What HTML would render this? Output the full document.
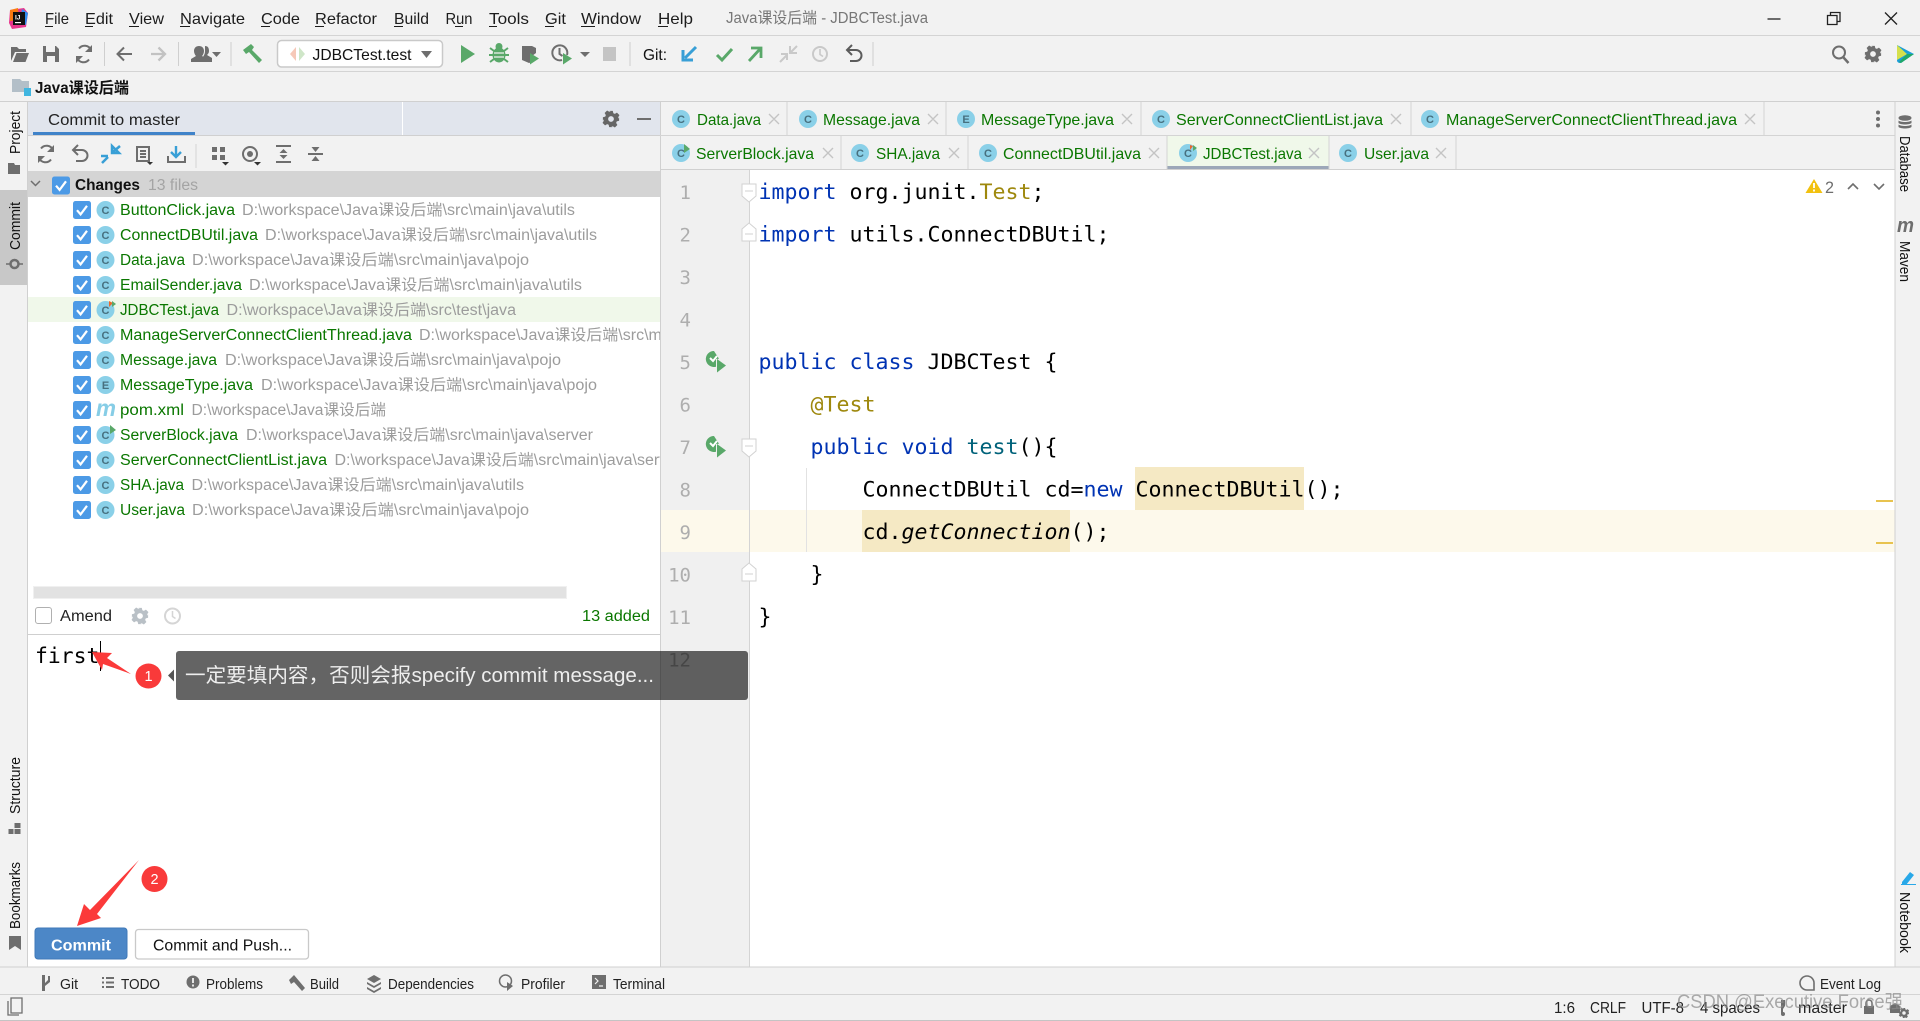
<!DOCTYPE html>
<html lang="zh"><head><meta charset="utf-8"><title>Java课设后端 - JDBCTest.java</title>
<style>
html,body{margin:0;padding:0;width:1920px;height:1021px;overflow:hidden;background:#f2f2f2}
svg{display:block;font-family:"Liberation Sans","Noto Sans CJK SC",sans-serif}
text{white-space:pre}
.m{font-size:16px;fill:#1c1c1c}
.t{font-size:16px;fill:#0a7700}
.f{font-size:15.5px;fill:#0a7700}
.p{font-size:15.5px;fill:#9c9c9c}
.x{stroke:#c4c4c4;stroke-width:1.4;fill:none}
.ci circle{fill:#8ad0e8}
.ci text{font-size:11px;font-weight:bold;fill:#47707f;text-anchor:middle}
.c{font-family:"DejaVu Sans Mono","Liberation Mono",monospace;font-size:21.6px;fill:#000}
.k{fill:#0033b3}.a{fill:#9e880d}.g{fill:#00627a}
.n{font-family:"DejaVu Sans Mono","Liberation Mono",monospace;font-size:19px;fill:#aeaeae;text-anchor:end}
.v{font-size:14.5px;fill:#111}
.b{font-size:14.5px;fill:#222}
.s{font-size:15.5px;fill:#222}
.i{fill:#6e6e6e}
.l{stroke:#6e6e6e;stroke-width:2;fill:none}
</style></head><body>
<svg width="1920" height="1021" viewBox="0 0 1920 1021" xmlns="http://www.w3.org/2000/svg">
<defs>
<g id="cb"><rect x="0" y="0" width="18" height="18" rx="2.5" fill="#4c9ae6"/><path d="M4 9.200l3.600 4.200L14 4.800" fill="none" stroke="#fff" stroke-width="2.2"/></g>
<path id="gear" d="M-2-9h4l.6 2.6 1.7.7 2.3-1.4 2.8 2.8-1.4 2.3.7 1.7L9-2v4l-2.6.6-.7 1.7 1.4 2.3-2.8 2.8-2.3-1.4-1.7.7L2 9h-4l-.6-2.6-1.7-.7-2.3 1.4-2.8-2.8 1.4-2.3-.7-1.7L-9 2v-4l2.6-.6.7-1.7-1.4-2.3 2.8-2.8 2.3 1.4 1.7-.7zM0-3.2a3.2 3.2 0 1 0 0 6.4 3.2 3.2 0 1 0 0-6.4z" fill-rule="evenodd"/>
<g id="rg"><path d="M-1 -10a8 8 0 1 0 2 15.7V-2l3-.2z" fill="#59a869"/><path d="M-5-3l3 3 4-5" fill="none" stroke="#fff" stroke-width="2"/><path d="M2-2l9 6.5-9 7z" fill="#59a869"/></g>
<path id="fd" d="M-7 0v-8h14V4L0 10-7 4z" fill="#fff" stroke="#d2d2d2"/>
<path id="fu" d="M-7 0V8H7V-4L0-10-7-4z" fill="#fff" stroke="#d2d2d2"/>
<clipPath id="pc"><rect x="27" y="197" width="633" height="437"/></clipPath>
</defs>

<rect width="1920" height="1021" fill="#f2f2f2"/>
<!-- title bar -->
<g>
<path d="M10 10l14-2 4 5-2 14-14 2-3-6z" fill="#e8358c"/><path d="M10 10l8-2 1 12-9 1z" fill="#f97a12"/><path d="M22 9l6 4-2 12-6-4z" fill="#2f8ef0"/>
<rect x="13" y="12" width="12" height="13" fill="#111"/><rect x="15" y="22" width="6" height="1.2" fill="#fff"/>
<text x="15" y="19.5" font-size="6.5" font-weight="bold" fill="#fff">IJ</text>
</g>
<text class="m" x="45" y="24" textLength="24" lengthAdjust="spacingAndGlyphs">File</text>
<text class="m" x="85" y="24" textLength="28" lengthAdjust="spacingAndGlyphs">Edit</text>
<text class="m" x="129" y="24" textLength="35" lengthAdjust="spacingAndGlyphs">View</text>
<text class="m" x="180" y="24" textLength="65" lengthAdjust="spacingAndGlyphs">Navigate</text>
<text class="m" x="261" y="24" textLength="39" lengthAdjust="spacingAndGlyphs">Code</text>
<text class="m" x="315" y="24" textLength="62" lengthAdjust="spacingAndGlyphs">Refactor</text>
<text class="m" x="394" y="24" textLength="35" lengthAdjust="spacingAndGlyphs">Build</text>
<text class="m" x="445.500" y="24" textLength="27" lengthAdjust="spacingAndGlyphs">Run</text>
<text class="m" x="489" y="24" textLength="40" lengthAdjust="spacingAndGlyphs">Tools</text>
<text class="m" x="545" y="24" textLength="21" lengthAdjust="spacingAndGlyphs">Git</text>
<text class="m" x="581" y="24" textLength="60" lengthAdjust="spacingAndGlyphs">Window</text>
<text class="m" x="658" y="24" textLength="35" lengthAdjust="spacingAndGlyphs">Help</text>
<path d="M45 26.500h8M85 26.500h8M129 26.500h10M180 26.500h10M261 26.500h9M315 26.500h9M394 26.500h9M455 26.500h8M489 26.500h8M545 26.500h9M581 26.500h14M658 26.500h10" stroke="#1c1c1c" stroke-width="1"/>
<text x="726" y="23" font-size="15.500" fill="#777" textLength="202" lengthAdjust="spacingAndGlyphs">Java课设后端 - JDBCTest.java</text>
<path d="M1767.500 19h13" stroke="#222" stroke-width="1.300"/>
<path d="M1827.500 15.500h9.500v9h-9.500zM1830.500 15.500v-3h9.500v9h-3" fill="none" stroke="#222" stroke-width="1.300"/>
<path d="M1885 12.500l12 12M1897 12.500l-12 12" stroke="#222" stroke-width="1.300"/>
<rect y="35" width="1920" height="1" fill="#d4d4d4"/>

<!-- toolbar -->
<path d="M11 61V47h6l2 2h7v3H15l-4 9zM13 62l3.500-9H29l-3.500 9z" class="i"/>
<path d="M43 46h13l3 3v13H43zM46 46v6h9v-6zM47 56h8v6h-8z" class="i" fill-rule="evenodd"/>
<path d="M91 50a7 7 0 0 0-12-1.500M77 58a7 7 0 0 0 12 1.500" class="l"/><path d="M92 45v7h-7zM76 63v-7h7z" class="i"/>
<path d="M104.500 42v24M178.500 42v24M231 42v24" stroke="#cfcfcf"/>
<path d="M132 54h-14M124 47.500L117.500 54l6.500 6.500" class="l" stroke-width="2.300"/>
<path d="M151 54h14M158.500 47.500L165 54l-6.500 6.500" fill="none" stroke="#c2c2c2" stroke-width="2.300"/>
<path d="M191 62v-3l5-3c-1-1-2-3-2-5 0-3 2-5 5-5s5 2 5 5c0 2-1 4-2 5l5 3v3zM205 46c3 0 4 2 4 5 0 2-1 3-2 4l5 3v4h-6l-1-4-2-1c1-2 2-3 2-6 0-2 0-4 0-5z" class="i"/>
<path d="M212 52h9l-4.500 5z" class="i"/>
<path d="M243 50l8-6 3 3-2 3 10 10-3 3-10-11-3 2z" fill="#59a869"/>
<rect x="277.500" y="40.500" width="165" height="26.500" rx="4" fill="#fff" stroke="#c9c9c9" stroke-width="1.500"/>
<path d="M296 47l-6 7 6 7z" fill="#f6c8b8"/><path d="M299 47l6 7-6 7z" fill="#cfe6c8"/>
<text x="312.500" y="60" font-size="16" fill="#111" textLength="99" lengthAdjust="spacingAndGlyphs">JDBCTest.test</text>
<path d="M421 51h11l-5.500 7z" fill="#6e6e6e"/>
<path d="M461 45l14 9-14 9z" fill="#59a869"/>
<g fill="#59a869"><ellipse cx="499" cy="55" rx="6.500" ry="7.500"/><circle cx="499" cy="46.500" r="3.500"/><path d="M490 48l4 3M508 48l-4 3M489 55h5M504 55h5M490 62l4-3M508 62l-4-3" stroke="#59a869" stroke-width="2"/></g><path d="M494 53h10M494 57h10" stroke="#f2f2f2" stroke-width="1.300"/>
<path d="M522 46h10l4 2v5l-4 3v6l-3 1-7-3z" class="i"/><path d="M530 53l9 5.500-9 6z" fill="#59a869"/>
<path d="M562 60a7.500 7.500 0 1 1 5-5M559.500 48v6l3 2" class="l" stroke-width="1.600"/><path d="M563 53l9 5.500-9 6z" fill="#59a869"/>
<path d="M580 52h10l-5 5z" class="i"/>
<rect x="603" y="47" width="13" height="14" fill="#c4c4c4"/>
<path d="M630 42v24" stroke="#cfcfcf"/>
<text x="643" y="60" font-size="16" fill="#111" textLength="24" lengthAdjust="spacingAndGlyphs">Git:</text>
<path d="M696 47l-11 11M683 50v10h10" fill="none" stroke="#389fd6" stroke-width="3"/>
<path d="M717 55l5 5 10-11" fill="none" stroke="#59a869" stroke-width="3"/>
<path d="M749 61l11-12M751 48h10v10" fill="none" stroke="#59a869" stroke-width="2.800"/>
<path d="M780 62l7-7M781 54h6v6M797 46l-7 7M790 46v7h7" fill="none" stroke="#c9c9c9" stroke-width="2"/>
<circle cx="820" cy="54" r="7" fill="none" stroke="#c9c9c9" stroke-width="2"/><path d="M820 49v5.500l3 2" fill="none" stroke="#c9c9c9" stroke-width="1.600"/>
<path d="M848 50h8a5 5 0 0 1 0 11h-6" fill="none" stroke="#5c5c5c" stroke-width="2"/><path d="M852 45l-5 5 5 5" fill="none" stroke="#5c5c5c" stroke-width="2"/>
<path d="M873 42v24" stroke="#cfcfcf"/>
<circle cx="1839" cy="52.500" r="6" fill="none" stroke="#6e6e6e" stroke-width="2"/><path d="M1843.500 57.500l5 5.500" stroke="#6e6e6e" stroke-width="2.500"/>
<use href="#gear" transform="translate(1873 54) scale(.9)" fill="#6e6e6e"/>
<path d="M1897 45l17 9-13 9c-3 0-4-1-4-3z" fill="#1c9ed8"/><path d="M1897 45l10 9-10 6z" fill="#d5e04c"/><path d="M1899 62l8-8 7 0-13 9z" fill="#20a868"/>
<rect y="71" width="1920" height="1" fill="#d4d4d4"/>

<!-- nav -->
<path d="M12 79h8l2 2h7v11H12z" fill="#b3bfc8"/><rect x="24" y="88" width="7" height="8" fill="#40b6e0"/>
<text x="35" y="93" font-size="15.500" font-weight="bold" fill="#111" textLength="94" lengthAdjust="spacingAndGlyphs">Java课设后端</text>
<rect y="101" width="1920" height="1" fill="#d0d0d0"/>

<!-- left stripe -->
<rect x="0" y="190" width="27" height="95" fill="#c8c8c8"/>
<rect x="27" y="102" width="1" height="865" fill="#d0d0d0"/>
<text class="v" transform="translate(20 154) rotate(-90)" textLength="43" lengthAdjust="spacingAndGlyphs">Project</text>
<path d="M8 163h6l1 2h5v9H8z" class="i"/>
<text class="v" transform="translate(20 250) rotate(-90)" textLength="48" lengthAdjust="spacingAndGlyphs">Commit</text>
<circle cx="14.500" cy="264" r="4" fill="none" stroke="#6e6e6e" stroke-width="2.500"/><path d="M6 264h4M19 264h4" stroke="#6e6e6e" stroke-width="1.500"/>
<text class="v" transform="translate(20 814) rotate(-90)" textLength="57" lengthAdjust="spacingAndGlyphs">Structure</text>
<path d="M14.500 823h6v5h-6zM8.500 829h5v5h-5zM14.500 829h6v5h-6z" class="i"/>
<text class="v" transform="translate(20 929) rotate(-90)" textLength="67" lengthAdjust="spacingAndGlyphs">Bookmarks</text>
<path d="M9 936h12v14l-6-4-6 4z" class="i"/>

<!-- commit panel -->
<rect x="28" y="102" width="632" height="33" fill="#e1e5ed"/>
<rect x="402" y="102" width="1" height="33" fill="#fff"/>
<rect x="33" y="132" width="162" height="3.500" fill="#4083c9"/>
<rect x="28" y="135" width="632" height="1" fill="#d0d0d0"/>
<text x="48" y="125" font-size="15.500" fill="#222" textLength="132" lengthAdjust="spacingAndGlyphs">Commit to master</text>
<use href="#gear" transform="translate(611 119) scale(.9)" fill="#666"/>
<path d="M637 119h14" stroke="#6e6e6e" stroke-width="2"/>
<rect x="28" y="136" width="632" height="35" fill="#f2f2f2"/>
<path d="M53 150a7 7 0 0 0-12-1.500M39 158a7 7 0 0 0 12 1.500" class="l"/><path d="M54 145v7h-7zM38 163v-7h7z" class="i"/>
<path d="M74 150h8a5 5 0 0 1 0 11h-6" class="l"/><path d="M78 145l-5 5 5 5" class="l"/>
<path d="M102 163l6-6M101 156h7v0M120 146l-7 6M112 146v7h7z" fill="none" stroke="#389fd6" stroke-width="2.500"/>
<path d="M137 147h12v14h-12zM140 151h6M140 154h6M140 157h6" class="l" stroke-width="1.500"/><path d="M147 162h6l-3 3z" fill="#333"/>
<path d="M176 146v11M171 152l5 5 5-5" fill="none" stroke="#389fd6" stroke-width="2.400"/><path d="M168 156v6h17v-6" class="l"/>
<path d="M196 144v24" stroke="#d4d4d4"/>
<path d="M212 147h5v5h-5zM220 147h5v5h-5zM212 155h5v5h-5zM220 155h5v5h-5z" class="i"/><path d="M222 162h7l-3.500 3.500z" fill="#333"/>
<circle cx="250" cy="154" r="7" fill="none" stroke="#6e6e6e" stroke-width="2"/><circle cx="250" cy="154" r="3" class="i"/><path d="M254 162h7l-3.500 3.500z" fill="#333"/>
<path d="M276 146h15M276 162h15" class="l" stroke-width="2"/><path d="M283.500 149l4 4h-8zM283.500 159l4-4h-8z" class="i"/>
<path d="M308 154h15" class="l" stroke-width="1.500"/><path d="M315.500 152l-4-5h8zM315.500 156l-4 5h8z" class="i"/>

<!-- changes header -->
<rect x="28" y="171" width="632" height="26" fill="#d4d4d4"/>
<path d="M31 181l4.500 4.500 4.500-4.500" fill="none" stroke="#6e6e6e" stroke-width="1.500"/>
<use href="#cb" x="52" y="176.500"/>
<text x="75" y="190" font-size="15.500" font-weight="bold" fill="#111" textLength="65" lengthAdjust="spacingAndGlyphs">Changes</text>
<text x="148" y="190" font-size="15.500" fill="#a4a4a4" textLength="50" lengthAdjust="spacingAndGlyphs">13 files</text>
<rect x="28" y="197" width="632" height="437" fill="#fff"/>
<rect x="28" y="297" width="632" height="25" fill="#f0f8ea"/>

<!-- file list -->
<g>
<use href="#cb" x="73" y="201"/><use href="#cb" x="73" y="226"/><use href="#cb" x="73" y="251"/><use href="#cb" x="73" y="276"/><use href="#cb" x="73" y="301"/><use href="#cb" x="73" y="326"/><use href="#cb" x="73" y="351"/><use href="#cb" x="73" y="376"/><use href="#cb" x="73" y="401"/><use href="#cb" x="73" y="426"/><use href="#cb" x="73" y="451"/><use href="#cb" x="73" y="476"/><use href="#cb" x="73" y="501"/>
</g>
<g class="ci">
<g transform="translate(105.500 210)"><circle r="9"/><text y="4">C</text></g>
<g transform="translate(105.500 235)"><circle r="9"/><text y="4">C</text></g>
<g transform="translate(105.500 260)"><circle r="9"/><text y="4">C</text></g>
<g transform="translate(105.500 285)"><circle r="9"/><text y="4">C</text></g>
<g transform="translate(105.500 310)"><circle r="9"/><text y="4">C</text></g>
<g transform="translate(105.500 335)"><circle r="9"/><text y="4">C</text></g>
<g transform="translate(105.500 360)"><circle r="9"/><text y="4">C</text></g>
<g transform="translate(105.500 385)"><circle r="9"/><text y="4">E</text></g>
<g transform="translate(105.500 435)"><circle r="9"/><text y="4">C</text></g>
<g transform="translate(105.500 460)"><circle r="9"/><text y="4">C</text></g>
<g transform="translate(105.500 485)"><circle r="9"/><text y="4">C</text></g>
<g transform="translate(105.500 510)"><circle r="9"/><text y="4">C</text></g>
</g>
<path d="M109 301l4 2-4 4z" fill="#e9682c"/><path d="M112 301l4 3-4 3z" fill="#59a869"/>
<path d="M110 425l6 5-6 4z" fill="#59a869"/>
<text x="96" y="416" font-size="23" font-style="italic" font-weight="bold" fill="#86cde6" textLength="20" lengthAdjust="spacingAndGlyphs">m</text>

<g clip-path="url(#pc)">
<text class="f" x="120" y="215" textLength="115" lengthAdjust="spacingAndGlyphs">ButtonClick.java</text><text class="p" x="242" y="215" textLength="333" lengthAdjust="spacingAndGlyphs">D:\workspace\Java课设后端\src\main\java\utils</text>
<text class="f" x="120" y="240" textLength="138" lengthAdjust="spacingAndGlyphs">ConnectDBUtil.java</text><text class="p" x="265" y="240" textLength="332" lengthAdjust="spacingAndGlyphs">D:\workspace\Java课设后端\src\main\java\utils</text>
<text class="f" x="120" y="265" textLength="65" lengthAdjust="spacingAndGlyphs">Data.java</text><text class="p" x="192" y="265" textLength="337" lengthAdjust="spacingAndGlyphs">D:\workspace\Java课设后端\src\main\java\pojo</text>
<text class="f" x="120" y="290" textLength="122" lengthAdjust="spacingAndGlyphs">EmailSender.java</text><text class="p" x="249" y="290" textLength="333" lengthAdjust="spacingAndGlyphs">D:\workspace\Java课设后端\src\main\java\utils</text>
<text class="f" x="120" y="315" textLength="99" lengthAdjust="spacingAndGlyphs">JDBCTest.java</text><text class="p" x="226.500" y="315" textLength="289.500" lengthAdjust="spacingAndGlyphs">D:\workspace\Java课设后端\src\test\java</text>
<text class="f" x="120" y="340" textLength="292" lengthAdjust="spacingAndGlyphs">ManageServerConnectClientThread.java</text><text class="p" x="419" y="340" textLength="347" lengthAdjust="spacingAndGlyphs">D:\workspace\Java课设后端\src\main\java\server</text>
<text class="f" x="120" y="365" textLength="97" lengthAdjust="spacingAndGlyphs">Message.java</text><text class="p" x="225" y="365" textLength="336" lengthAdjust="spacingAndGlyphs">D:\workspace\Java课设后端\src\main\java\pojo</text>
<text class="f" x="120" y="390" textLength="133" lengthAdjust="spacingAndGlyphs">MessageType.java</text><text class="p" x="261" y="390" textLength="336" lengthAdjust="spacingAndGlyphs">D:\workspace\Java课设后端\src\main\java\pojo</text>
<text class="f" x="120" y="415" textLength="64" lengthAdjust="spacingAndGlyphs">pom.xml</text><text class="p" x="191.500" y="415" textLength="194.500" lengthAdjust="spacingAndGlyphs">D:\workspace\Java课设后端</text>
<text class="f" x="120" y="440" textLength="118" lengthAdjust="spacingAndGlyphs">ServerBlock.java</text><text class="p" x="246" y="440" textLength="347" lengthAdjust="spacingAndGlyphs">D:\workspace\Java课设后端\src\main\java\server</text>
<text class="f" x="120" y="465" textLength="207" lengthAdjust="spacingAndGlyphs">ServerConnectClientList.java</text><text class="p" x="334.500" y="465" textLength="347" lengthAdjust="spacingAndGlyphs">D:\workspace\Java课设后端\src\main\java\server</text>
<text class="f" x="120" y="490" textLength="64" lengthAdjust="spacingAndGlyphs">SHA.java</text><text class="p" x="191.500" y="490" textLength="332.500" lengthAdjust="spacingAndGlyphs">D:\workspace\Java课设后端\src\main\java\utils</text>
<text class="f" x="120" y="515" textLength="65" lengthAdjust="spacingAndGlyphs">User.java</text><text class="p" x="192" y="515" textLength="337" lengthAdjust="spacingAndGlyphs">D:\workspace\Java课设后端\src\main\java\pojo</text>
</g>

<!-- scrollbar + amend -->
<rect x="33.500" y="586.500" width="533" height="12" fill="#e2e2e2" stroke="#f0f0f0"/>
<rect x="35.500" y="607.500" width="16" height="16" rx="2.500" fill="#fff" stroke="#b0b0b0"/>
<text x="60" y="621" font-size="15.500" fill="#222" textLength="52" lengthAdjust="spacingAndGlyphs">Amend</text>
<use href="#gear" transform="translate(140 616) scale(.9)" fill="#b9c0c6"/>
<circle cx="172.500" cy="616" r="7.500" fill="none" stroke="#d5d5d5" stroke-width="2"/><path d="M172.500 611v5.500l3 2" fill="none" stroke="#d5d5d5" stroke-width="1.500"/>
<text x="582" y="621" font-size="15.500" fill="#0a7700" textLength="68" lengthAdjust="spacingAndGlyphs">13 added</text>
<rect x="28" y="634" width="632" height="1" fill="#cfcfcf"/>
<rect x="28" y="635" width="632" height="332" fill="#fff"/>
<text x="35" y="663" font-family="DejaVu Sans Mono,Liberation Mono,monospace" font-size="21.370" fill="#000">first</text>
<rect x="100" y="641" width="1" height="30" fill="#000"/>

<!-- commit buttons -->
<rect x="35" y="928" width="92" height="31" rx="3" fill="#4c87c7" stroke="#3f79b8"/>
<text x="51" y="950.500" font-size="15.500" font-weight="bold" fill="#fff" textLength="60" lengthAdjust="spacingAndGlyphs">Commit</text>
<rect x="135.500" y="929.500" width="173" height="29.500" rx="3" fill="#fff" stroke="#c9c9c9" stroke-width="1.300"/>
<text x="153" y="950.500" font-size="15.500" fill="#111" textLength="139" lengthAdjust="spacingAndGlyphs">Commit and Push...</text>

<!-- editor -->
<rect x="660" y="102" width="1" height="865" fill="#d0d0d0"/>
<rect x="661" y="102" width="1234" height="67" fill="#f2f2f2"/>
<rect x="1167" y="136" width="162" height="30" fill="#f0f8ea"/>
<rect x="1167" y="166" width="162" height="3.500" fill="#9ca7b8"/>
<rect x="660" y="135" width="1235" height="1" fill="#d4d4d4"/>
<rect x="660" y="169" width="1235" height="1" fill="#d0d0d0"/>
<path d="M787 102v33M946 102v33M1141 102v33M1411 102v33M1764 102v33M841 136v33M968 136v33M1167 136v33M1329 136v33M1456 136v33" stroke="#d4d4d4"/>
<g class="ci">
<g transform="translate(681 119)"><circle r="9"/><text y="4">C</text></g>
<g transform="translate(808 119)"><circle r="9"/><text y="4">C</text></g>
<g transform="translate(966 119)"><circle r="9"/><text y="4">E</text></g>
<g transform="translate(1161 119)"><circle r="9"/><text y="4">C</text></g>
<g transform="translate(1430 119)"><circle r="9"/><text y="4">C</text></g>
<g transform="translate(681 153)"><circle r="9"/><text y="4">C</text></g>
<g transform="translate(860 153)"><circle r="9"/><text y="4">C</text></g>
<g transform="translate(988 153)"><circle r="9"/><text y="4">C</text></g>
<g transform="translate(1188 153)"><circle r="9"/><text y="4">C</text></g>
<g transform="translate(1348 153)"><circle r="9"/><text y="4">C</text></g>
</g>
<path d="M684 144l6 5-6 4z" fill="#59a869"/><path d="M1190 145l3 1-3 4z" fill="#e9682c"/><path d="M1193 145l4 3-4 3z" fill="#59a869"/>
<text class="t" x="697" y="125" textLength="64" lengthAdjust="spacingAndGlyphs">Data.java</text>
<text class="t" x="823" y="125" textLength="97" lengthAdjust="spacingAndGlyphs">Message.java</text>
<text class="t" x="981" y="125" textLength="133" lengthAdjust="spacingAndGlyphs">MessageType.java</text>
<text class="t" x="1176" y="125" textLength="207" lengthAdjust="spacingAndGlyphs">ServerConnectClientList.java</text>
<text class="t" x="1446" y="125" textLength="291" lengthAdjust="spacingAndGlyphs">ManageServerConnectClientThread.java</text>
<text class="t" x="696" y="159" textLength="118" lengthAdjust="spacingAndGlyphs">ServerBlock.java</text>
<text class="t" x="876" y="159" textLength="64" lengthAdjust="spacingAndGlyphs">SHA.java</text>
<text class="t" x="1003" y="159" textLength="138" lengthAdjust="spacingAndGlyphs">ConnectDBUtil.java</text>
<text class="t" x="1203" y="159" textLength="99" lengthAdjust="spacingAndGlyphs">JDBCTest.java</text>
<text class="t" x="1364" y="159" textLength="65" lengthAdjust="spacingAndGlyphs">User.java</text>
<path class="x" d="M769 114l10 10M779 114l-10 10M928 114l10 10M938 114l-10 10M1122 114l10 10M1132 114l-10 10M1391 114l10 10M1401 114l-10 10M1745 114l10 10M1755 114l-10 10M823 148l10 10M833 148l-10 10M949 148l10 10M959 148l-10 10M1149 148l10 10M1159 148l-10 10M1309 148l10 10M1319 148l-10 10M1436 148l10 10M1446 148l-10 10"/>
<circle cx="1878" cy="112.500" r="2" class="i"/><circle cx="1878" cy="119" r="2" class="i"/><circle cx="1878" cy="125.500" r="2" class="i"/>

<rect x="661" y="170" width="1234" height="797" fill="#fff"/>
<rect x="661" y="170" width="88" height="797" fill="#f0f0f0"/>
<rect x="661" y="510" width="1234" height="42" fill="#fdf9eb"/>
<rect x="749" y="170" width="1" height="797" fill="#d4d4d4"/>
<rect x="1135" y="467" width="169" height="43" fill="#f5e9c4"/>
<rect x="862" y="510" width="208" height="42" fill="#f5e9c4"/>
<rect x="806" y="468" width="1" height="84" fill="#e2e2e2"/>
<rect x="1876" y="500" width="17" height="2" fill="#e8c34f"/>
<rect x="1876" y="542" width="17" height="2" fill="#e8c34f"/>

<g>
<text class="n" x="691" y="199">1</text><text class="n" x="691" y="241.500">2</text><text class="n" x="691" y="284">3</text><text class="n" x="691" y="326.500">4</text><text class="n" x="691" y="369">5</text><text class="n" x="691" y="411.500">6</text><text class="n" x="691" y="454">7</text><text class="n" x="691" y="496.500">8</text><text class="n" x="691" y="539">9</text><text class="n" x="691" y="581.500">10</text><text class="n" x="691" y="624">11</text><text class="n" x="691" y="666.500">12</text>
</g>
<use href="#rg" transform="translate(715 361)"/><use href="#rg" transform="translate(715 446)"/>
<use href="#fd" x="749" y="192"/><path d="M745 191h8" stroke="#d2d2d2"/>
<use href="#fu" x="749" y="233"/><path d="M745 234h8" stroke="#d2d2d2"/>
<use href="#fd" x="749" y="447"/><path d="M745 446h8" stroke="#d2d2d2"/>
<use href="#fu" x="749" y="573"/><path d="M745 574h8" stroke="#d2d2d2"/>

<text class="c" x="758.500" y="199"><tspan class="k">import</tspan> org.junit.<tspan class="a">Test</tspan>;</text>
<text class="c" x="758.500" y="241.500"><tspan class="k">import</tspan> utils.ConnectDBUtil;</text>
<text class="c" x="758.500" y="369"><tspan class="k">public class</tspan> JDBCTest {</text>
<text class="c a" x="810.500" y="411.500">@Test</text>
<text class="c" x="810.500" y="454"><tspan class="k">public void</tspan> <tspan class="g">test</tspan>(){</text>
<text class="c" x="862.500" y="496.500">ConnectDBUtil cd=<tspan class="k">new</tspan> ConnectDBUtil();</text>
<text class="c" x="862.500" y="539">cd.<tspan font-style="italic">getConnection</tspan>();</text>
<text class="c" x="810.500" y="581.500">}</text>
<text class="c" x="758.500" y="624">}</text>

<path d="M1814 179l8.500 14h-17z" fill="#f2c10f"/><path d="M1814 183v5M1814 189.500v2" stroke="#fff" stroke-width="1.800"/>
<text x="1825" y="193" font-size="17" fill="#6e6e6e" textLength="9" lengthAdjust="spacingAndGlyphs">2</text>
<path d="M1848 189l5-5 5 5M1874 184l5 5 5-5" fill="none" stroke="#6e6e6e" stroke-width="1.600"/>

<!-- right stripe -->
<rect x="1894.500" y="102" width="1" height="865" fill="#d0d0d0"/>
<g class="i"><ellipse cx="1905" cy="118" rx="6.500" ry="2.800"/><path d="M1898.500 120.500c2 2 11 2 13 0v2.500c-2 2-11 2-13 0zM1898.500 124.500c2 2 11 2 13 0v2.500c-2 2-11 2-13 0z"/></g>
<text class="v" transform="translate(1900 136) rotate(90)" textLength="56" lengthAdjust="spacingAndGlyphs">Database</text>
<text x="1897" y="232" font-size="20" font-style="italic" font-weight="bold" fill="#6e6e6e" textLength="17" lengthAdjust="spacingAndGlyphs">m</text>
<text class="v" transform="translate(1900 241) rotate(90)" textLength="41" lengthAdjust="spacingAndGlyphs">Maven</text>
<path d="M1902 882l8-10 4 3-8 10h-4zM1901 885h1" fill="#29a8e8"/><path d="M1901 884.500h15" stroke="#29a8e8" stroke-width="1"/>
<text class="v" transform="translate(1900 892) rotate(90)" textLength="61" lengthAdjust="spacingAndGlyphs">Notebook</text>

<!-- bottom bars -->
<rect y="966.500" width="1920" height="1" fill="#d0d0d0"/>
<rect y="967.500" width="1920" height="26.500" fill="#f2f2f2"/>
<path d="M42 975v16h3v-5l5-4v-6h-2v4l-3 3v-8z" class="i"/>
<text class="b" x="60" y="989" textLength="18" lengthAdjust="spacingAndGlyphs">Git</text>
<path d="M102 977h2v2h-2zM102 981.500h2v2h-2zM102 986h2v2h-2zM106 977h8v2h-8zM106 981.500h8v2h-8zM106 986h8v2h-8z" class="i"/>
<text class="b" x="121" y="989" textLength="39" lengthAdjust="spacingAndGlyphs">TODO</text>
<circle cx="193" cy="982" r="6.500" class="i"/><path d="M193 978v5M193 984.500v2" stroke="#f2f2f2" stroke-width="1.800"/>
<text class="b" x="206" y="989" textLength="57" lengthAdjust="spacingAndGlyphs">Problems</text>
<path d="M289 980l5-5 11 13-3 3-8-9-3 2z" class="i"/>
<text class="b" x="310" y="989" textLength="29" lengthAdjust="spacingAndGlyphs">Build</text>
<path d="M374 975l7 4-7 4-7-4zM367 982l7 4 7-4v2l-7 4-7-4zM367 987l7 4 7-4v2l-7 4-7-4z" class="i"/>
<text class="b" x="388" y="989" textLength="86" lengthAdjust="spacingAndGlyphs">Dependencies</text>
<circle cx="505.500" cy="981" r="6" fill="none" stroke="#6e6e6e" stroke-width="1.500"/><path d="M507 982l6 4-6 5z" class="i"/>
<text class="b" x="521" y="989" textLength="44" lengthAdjust="spacingAndGlyphs">Profiler</text>
<rect x="592" y="975" width="14" height="14" class="i"/><path d="M595 978l3 3-3 3M599 986h4" fill="none" stroke="#f2f2f2" stroke-width="1.200"/>
<text class="b" x="613" y="989" textLength="52" lengthAdjust="spacingAndGlyphs">Terminal</text>
<path d="M1807 976a7 7 0 1 0 0 14h7v-7a7 7 0 0 0-7-7z" fill="none" stroke="#6e6e6e" stroke-width="1.600"/>
<text class="b" x="1820" y="989" textLength="61" lengthAdjust="spacingAndGlyphs">Event Log</text>
<rect y="994" width="1920" height="1" fill="#d4d4d4"/>
<path d="M11 998h11v15H11zM8 1001v14h11" fill="none" stroke="#6e6e6e" stroke-width="1.300"/>
<text class="s" x="1554" y="1013" textLength="21" lengthAdjust="spacingAndGlyphs">1:6</text>
<text class="s" x="1590" y="1013" textLength="36" lengthAdjust="spacingAndGlyphs">CRLF</text>
<text class="s" x="1641.500" y="1013" textLength="42.500" lengthAdjust="spacingAndGlyphs">UTF-8</text>
<text class="s" x="1700" y="1013" textLength="60" lengthAdjust="spacingAndGlyphs">4 spaces</text>
<path d="M1781 1000h4v6l-2 3v5h-2z" class="i"/><circle cx="1783" cy="1014" r="2" class="i"/>
<text class="s" x="1798" y="1013" textLength="49" lengthAdjust="spacingAndGlyphs">master</text>
<rect x="1864" y="1006" width="10" height="8" class="i"/><path d="M1866 1006v-3a3 3 0 0 1 6 0v3" fill="none" stroke="#6e6e6e" stroke-width="1.500"/>
<path d="M1890 1006l5-3 5 3v7h-10z" class="i"/><use href="#gear" transform="translate(1904 1013) scale(.55)" fill="#6e6e6e"/>
<rect y="1020" width="1920" height="1" fill="#c4c4c4"/>
<text x="1677" y="1008" font-size="19px" fill="#8a8a8a" fill-opacity=".72" textLength="226" lengthAdjust="spacingAndGlyphs">CSDN @Executive Force强</text>

<!-- annotations -->
<rect x="176" y="651" width="572" height="49" rx="3" fill="#0a0a0a" fill-opacity=".63"/>
<path d="M168 675.500l6-6v12z" fill="#555"/>
<text x="185" y="682" font-size="20px" fill="#eee" textLength="469" lengthAdjust="spacingAndGlyphs">一定要填内容，否则会报specify commit message...</text>
<polygon points="92,652 112,653 107,658 131,674 103,664 102,670" fill="#fb3a3a"/>
<ellipse cx="148.500" cy="676" rx="13" ry="12.500" fill="#f93a3a"/>
<text x="148.500" y="681" font-size="14.500" fill="#fff" text-anchor="middle">1</text>
<polygon points="77,926 84,904 90,910 139,860 97,914 101,918" fill="#fb3a3a"/>
<ellipse cx="154.500" cy="879" rx="13" ry="13" fill="#f93a3a"/>
<text x="154.500" y="884" font-size="14.500" fill="#fff" text-anchor="middle">2</text>
</svg>
</body></html>
